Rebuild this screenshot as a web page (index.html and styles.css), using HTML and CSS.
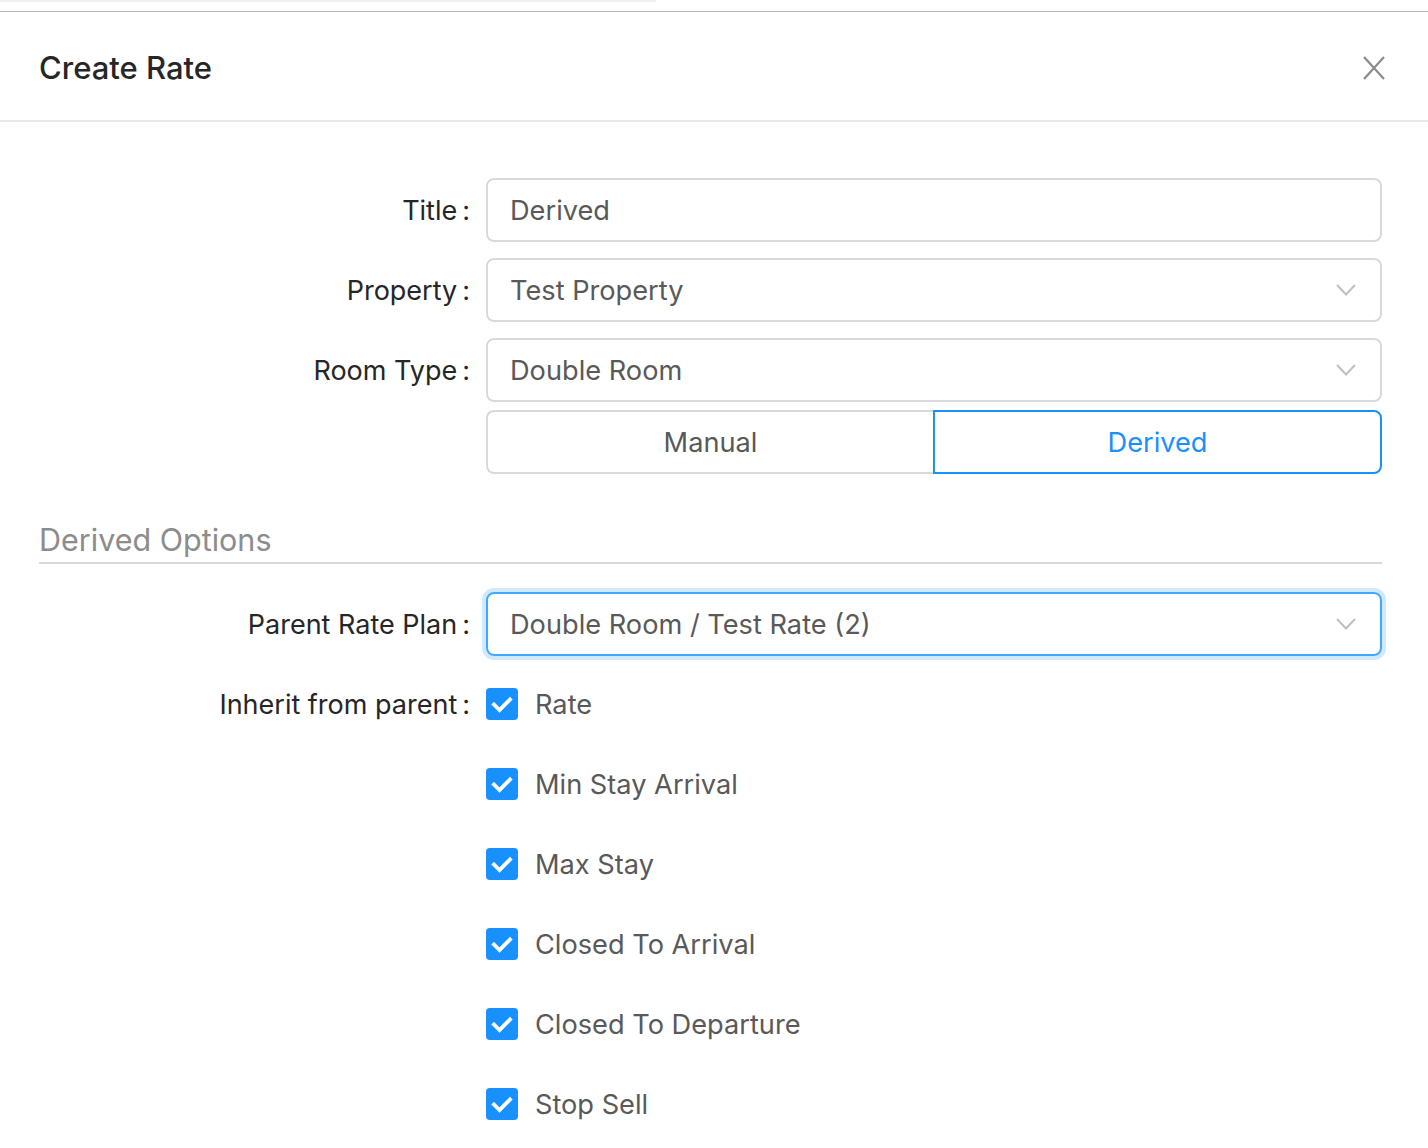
FILE: index.html
```html
<!DOCTYPE html>
<html lang="en">
<head>
<meta charset="utf-8">
<title>Create Rate</title>
<link rel="stylesheet" href="styles.css">
</head>
<body>
<div class="topstrip"><div class="pill"></div></div>
<div class="modal">
  <header class="modal-header">
    <h1 class="modal-title">Create Rate</h1>
    <button class="close" type="button" aria-label="Close">
      <svg width="22" height="24" viewBox="0 0 22 24"><path d="M1 1 L21 23 M21 1 L1 23" stroke="#8c8c8c" stroke-width="2.2" fill="none"/></svg>
    </button>
  </header>
  <div class="modal-body">
    <div class="row">
      <div class="lbl">Title<span class="colon">:</span></div>
      <div class="ctl"><div class="input">Derived</div></div>
    </div>
    <div class="row">
      <div class="lbl">Property<span class="colon">:</span></div>
      <div class="ctl"><div class="input select">Test Property<svg class="chev" width="20" height="12" viewBox="0 0 20 12"><path d="M1 1 L10 10.5 L19 1" stroke="#bfbfbf" stroke-width="2" fill="none"/></svg></div></div>
    </div>
    <div class="row row-tight">
      <div class="lbl">Room Type<span class="colon">:</span></div>
      <div class="ctl"><div class="input select">Double Room<svg class="chev" width="20" height="12" viewBox="0 0 20 12"><path d="M1 1 L10 10.5 L19 1" stroke="#bfbfbf" stroke-width="2" fill="none"/></svg></div></div>
    </div>
    <div class="row">
      <div class="lbl"></div>
      <div class="ctl">
        <div class="segmented">
          <div class="seg">Manual</div>
          <div class="seg seg-active">Derived</div>
        </div>
      </div>
    </div>
    <h2 class="section">Derived Options</h2>
    <div class="row">
      <div class="lbl">Parent Rate Plan<span class="colon">:</span></div>
      <div class="ctl"><div class="input select focused">Double Room / Test Rate (2)<svg class="chev" width="20" height="12" viewBox="0 0 20 12"><path d="M1 1 L10 10.5 L19 1" stroke="#bfbfbf" stroke-width="2" fill="none"/></svg></div></div>
    </div>
    <div class="row">
      <div class="lbl">Inherit from parent<span class="colon">:</span></div>
      <div class="ctl"><label class="check"><span class="box"><svg width="32" height="32" viewBox="0 0 32 32"><path d="M8 16.5 L13.5 22 L24 11.5" stroke="#fff" stroke-width="3.8" fill="none" stroke-linecap="square"/></svg></span>Rate</label></div>
    </div>
    <div class="row">
      <div class="lbl"></div>
      <div class="ctl"><label class="check"><span class="box"><svg width="32" height="32" viewBox="0 0 32 32"><path d="M8 16.5 L13.5 22 L24 11.5" stroke="#fff" stroke-width="3.8" fill="none" stroke-linecap="square"/></svg></span>Min Stay Arrival</label></div>
    </div>
    <div class="row">
      <div class="lbl"></div>
      <div class="ctl"><label class="check"><span class="box"><svg width="32" height="32" viewBox="0 0 32 32"><path d="M8 16.5 L13.5 22 L24 11.5" stroke="#fff" stroke-width="3.8" fill="none" stroke-linecap="square"/></svg></span>Max Stay</label></div>
    </div>
    <div class="row">
      <div class="lbl"></div>
      <div class="ctl"><label class="check"><span class="box"><svg width="32" height="32" viewBox="0 0 32 32"><path d="M8 16.5 L13.5 22 L24 11.5" stroke="#fff" stroke-width="3.8" fill="none" stroke-linecap="square"/></svg></span>Closed To Arrival</label></div>
    </div>
    <div class="row">
      <div class="lbl"></div>
      <div class="ctl"><label class="check"><span class="box"><svg width="32" height="32" viewBox="0 0 32 32"><path d="M8 16.5 L13.5 22 L24 11.5" stroke="#fff" stroke-width="3.8" fill="none" stroke-linecap="square"/></svg></span>Closed To Departure</label></div>
    </div>
    <div class="row">
      <div class="lbl"></div>
      <div class="ctl"><label class="check"><span class="box"><svg width="32" height="32" viewBox="0 0 32 32"><path d="M8 16.5 L13.5 22 L24 11.5" stroke="#fff" stroke-width="3.8" fill="none" stroke-linecap="square"/></svg></span>Stop Sell</label></div>
    </div>
  </div>
</div>
</body>
</html>
```
FILE: styles.css
```css
html, body {
  margin: 0;
  padding: 0;
  background: #fff;
  font-family: "Inter", "Roboto", "Liberation Sans", sans-serif;
  overflow: hidden;
}
.topstrip {
  height: 11px;
  border-bottom: 1px solid #b8b8b8;
}
.pill {
  width: 656px;
  height: 2px;
  background: #f0f0f0;
  border-radius: 0 0 8px 0;
}
.modal-header {
  height: 110px;
  box-sizing: border-box;
  padding: 3px 43px 0 39px;
  border-bottom: 2px solid #e8e8e8;
  display: flex;
  align-items: center;
  justify-content: space-between;
}
.modal-title {
  margin: 0;
  font-size: 31px;
  font-weight: 500;
  color: #262626;
  line-height: 44px;
}
.close {
  border: 0;
  background: none;
  padding: 0;
  width: 22px;
  height: 24px;
  display: flex;
}
.modal-body {
  padding: 56px 46px 0 39px;
}
.row {
  display: grid;
  grid-template-columns: 447px 1fr;
  align-items: center;
  min-height: 64px;
  margin-bottom: 16px;
}
.row-tight {
  margin-bottom: 8px;
}
.lbl {
  text-align: right;
  padding-right: 16px;
  font-size: 27px;
  color: #262626;
  white-space: nowrap;
}
.colon {
  margin-left: 5px;
}
.input {
  height: 64px;
  box-sizing: border-box;
  border: 2px solid #d9d9d9;
  border-radius: 8px;
  padding: 0 22px;
  font-size: 27.2px;
  color: #595959;
  display: flex;
  align-items: center;
  justify-content: space-between;
}
.focused {
  border-color: #40a9ff;
  box-shadow: 0 0 0 4px rgba(24, 144, 255, 0.2);
}
.chev {
  margin-right: 2px;
}
.segmented {
  display: flex;
  height: 64px;
}
.seg {
  flex: 1;
  box-sizing: border-box;
  border: 2px solid #d9d9d9;
  display: flex;
  align-items: center;
  justify-content: center;
  font-size: 27.2px;
  color: #595959;
}
.seg:first-child {
  border-radius: 8px 0 0 8px;
  border-right: 0;
}
.seg-active {
  border-color: #1890ff;
  color: #1890ff;
  border-radius: 0 8px 8px 0;
}
.section {
  margin: 44px 0 28px 0;
  font-size: 30.5px;
  font-weight: 400;
  line-height: 44px;
  color: #8c8c8c;
  border-bottom: 2px solid #d9d9d9;
}
.check {
  display: flex;
  align-items: center;
  font-size: 27.2px;
  color: #595959;
}
.box {
  width: 32px;
  height: 32px;
  background: #1890ff;
  border-radius: 4px;
  margin-right: 17px;
  display: flex;
}
```
